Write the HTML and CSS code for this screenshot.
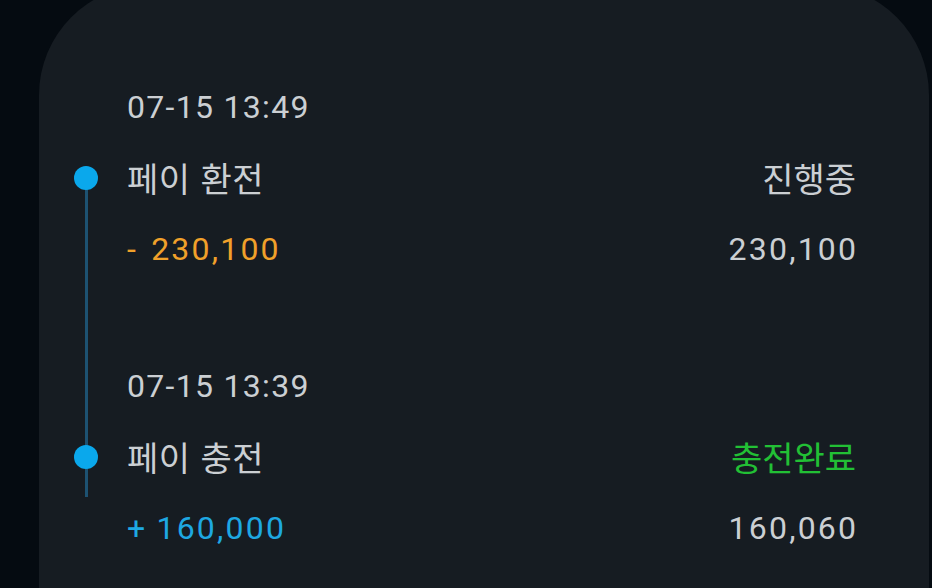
FILE: index.html
```html
<!DOCTYPE html>
<html lang="ko">
<head>
    <meta charset="UTF-8">
    <meta name="viewport" content="width=device-width, initial-scale=1.0">
    <title>페이 내역</title>
    <link rel="stylesheet" href="styles.css">
</head>
<body>
    <div class="card">
        <div class="timeline">
            <div class="entry">
                <div class="row">
                    <span class="date">07-15 13:49</span>
                </div>
                <div class="row title-row">
                    <span class="dot"></span>
                    <span class="title">페이 환전</span>
                    <span class="status">진행중</span>
                </div>
                <div class="row money-row">
                    <span class="amount minus">- 230,100</span>
                    <span class="balance">230,100</span>
                </div>
            </div>
            <div class="entry">
                <div class="row">
                    <span class="date">07-15 13:39</span>
                </div>
                <div class="row title-row">
                    <span class="dot"></span>
                    <span class="title">페이 충전</span>
                    <span class="status done">충전완료</span>
                </div>
                <div class="row money-row">
                    <span class="amount plus">+ 160,000</span>
                    <span class="balance">160,060</span>
                </div>
            </div>
        </div>
    </div>
</body>
</html>
```

FILE: styles.css
```css
/* 페이 내역 타임라인 */
html, body {
    height: 100%;
}
body {
    margin: 0;
    background-color: #050b11;
    font-family: Roboto, "Noto Sans CJK KR", sans-serif;
    color: #cbcfd3;
    overflow: hidden;
}
.card {
    margin: -15px 3px 0 39px;
    padding: 86px 73px 0 88px;
    min-height: 700px;
    background-color: #161c22;
    border-radius: 110px 110px 0 0;
    box-sizing: border-box;
}
.timeline {
    position: relative;
}
/* 세로 연결선 */
.timeline::before {
    content: "";
    position: absolute;
    left: -42px;
    top: 107px;
    width: 3px;
    height: 319px;
    background-color: #1d5272;
}
.entry + .entry {
    margin-top: 66px;
}
.row {
    position: relative;
    display: flex;
    justify-content: space-between;
    align-items: center;
    height: 71px;
    font-size: 32px;
    line-height: 1;
}
.date {
    letter-spacing: 1.3px;
}
.dot {
    position: absolute;
    left: -53px;
    top: 23.5px;
    width: 24px;
    height: 24px;
    border-radius: 50%;
    background-color: #0aa8ec;
}
.title-row {
    font-family: "Noto Sans CJK KR", sans-serif;
    font-size: 34px;
}
.title {
    letter-spacing: 0.5px;
}
.money-row {
    letter-spacing: 2.2px;
}
.balance {
    margin-right: -2.2px;
}
.amount.minus {
    word-spacing: 3px;
    color: #f0a02a;
}
.amount.plus {
    word-spacing: -1px;
    color: #1ea8e2;
}
.status.done {
    color: #22c035;
}
```
